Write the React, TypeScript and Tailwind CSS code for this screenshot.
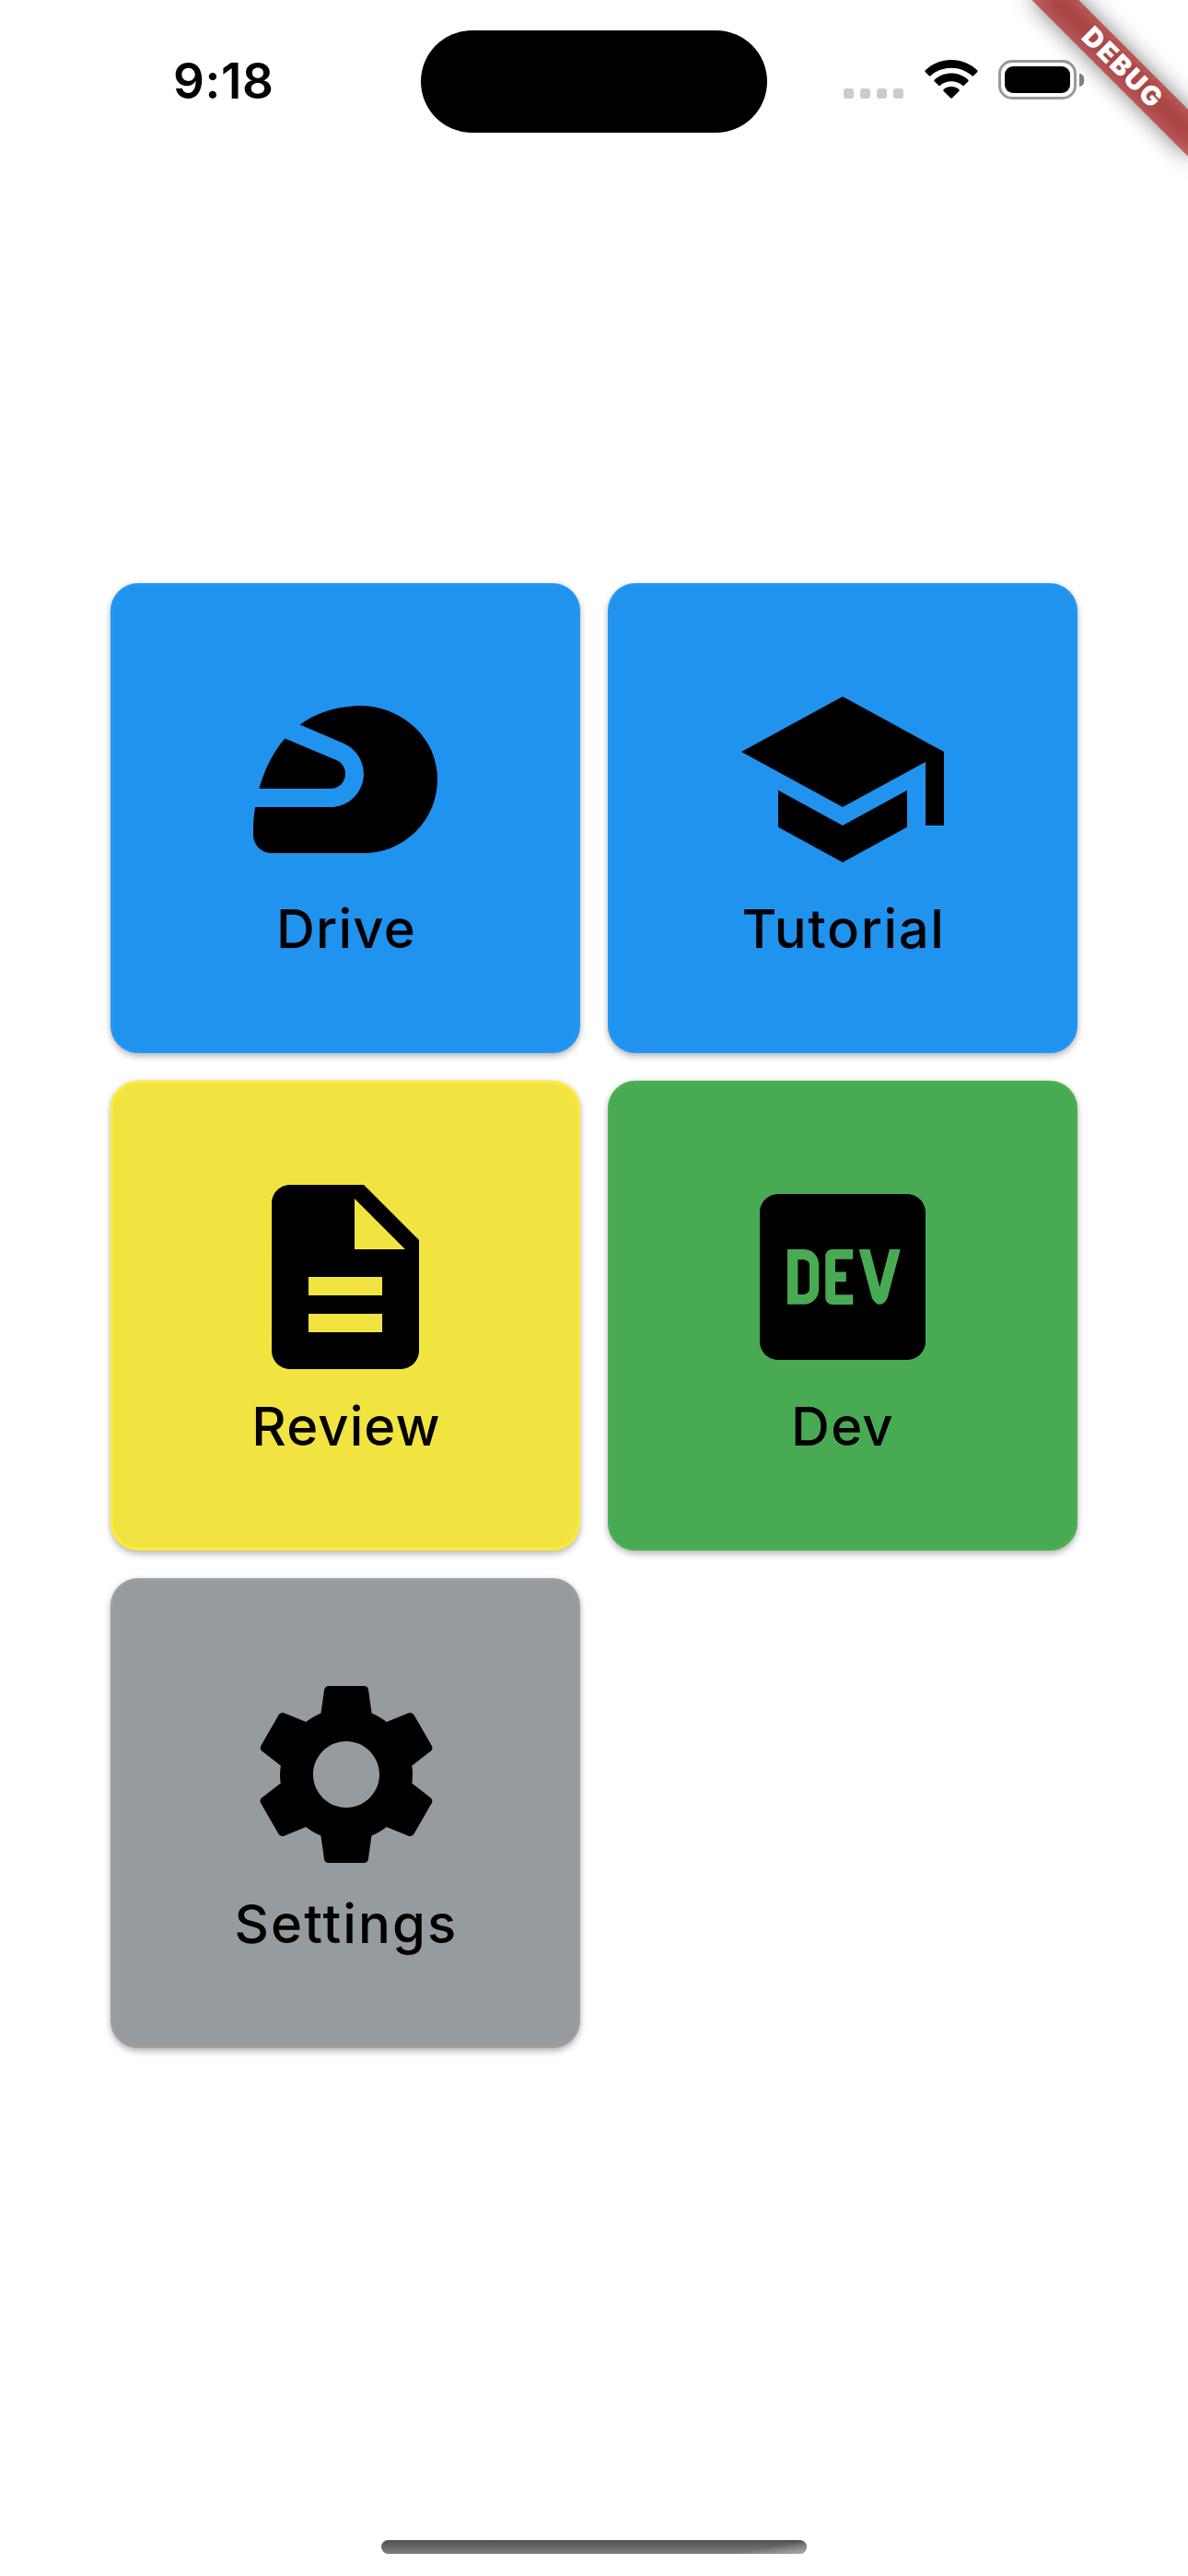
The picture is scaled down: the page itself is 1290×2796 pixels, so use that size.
import type { IconType } from "react-icons";
import {
  MdDescription,
  MdLogoDev,
  MdSchool,
  MdSettings,
  MdSportsMotorsports,
} from "react-icons/md";

type Tile = { label: string; icon: IconType; color: string; text: string; nudge?: string };

const tiles: Tile[] = [
  { label: "Drive", icon: MdSportsMotorsports, color: "border-[#2196f3] bg-[#2093ef]", text: "ml-[2px] tracking-[1.2px]" },
  { label: "Tutorial", icon: MdSchool, color: "border-[#2196f3] bg-[#2093ef]", text: "ml-[2px] tracking-[1.6px]" },
  { label: "Review", icon: MdDescription, color: "border-[#ffeb3b] bg-[#f2e440]", text: "ml-[2px] tracking-[1.1px]" },
  { label: "Dev", icon: MdLogoDev, color: "border-[#4caf50] bg-[#48ab54]", text: "tracking-[1.2px]" },
  { label: "Settings", icon: MdSettings, color: "border-[#9e9e9e] bg-[#959b9f]", text: "ml-[2px] tracking-[2.1px]", nudge: "ml-0.5" },
];

function TileCard({ label, icon: Icon, color, text, nudge = "" }: Tile) {
  return (
    <button
      className={`flex h-[510px] w-[510px] flex-col items-center justify-center rounded-[30px] border-[3px] shadow-[0_4px_7px_rgba(0,0,0,0.24),0_0_6px_rgba(0,0,0,0.1)] ${color}`}
    >
      <Icon className={`h-60 w-60 text-black ${nudge}`} />
      <span className={`text-[58px] leading-[84px] font-[460] text-black ${text}`}>{label}</span>
    </button>
  );
}

function Wifi() {
  return (
    <svg width="58" height="42" viewBox="0 0 58 42" className="ml-[23px]">
      <path d="M29 0C40 0 50 4.300 57.200 11.300Q58.100 12.200 57.200 13.200L53.100 17.300Q52.300 18.100 51.400 17.300C45.500 11.700 37.600 8.700 29 8.700S12.500 11.700 6.600 17.300Q5.700 18.100 4.900 17.300L.8 13.200Q-.1 12.200.8 11.300C8 4.300 18 0 29 0Z" />
      <path d="M29 14.600C36.100 14.600 42.500 17.300 47.200 21.600Q48.100 22.500 47.200 23.400L42.900 27.700Q42 28.500 41.100 27.700C37.900 24.900 33.700 23.200 29 23.200S20.100 24.900 16.900 27.700Q16 28.500 15.100 27.700L10.800 23.400Q9.900 22.500 10.800 21.600C15.500 17.300 21.900 14.600 29 14.600Z" />
      <path d="M29 29C32.300 29 35.200 30.200 37.300 32.100Q38.100 33 37.300 33.900L30 41.300Q29 42.200 28 41.300L20.700 33.900Q19.900 33 20.700 32.100C22.800 30.200 25.700 29 29 29Z" />
    </svg>
  );
}

function StatusBar() {
  return (
    <header className="flex h-[177px] items-start">
      <time className="mt-[57px] ml-[188px] w-[269px] text-[53px] leading-[62px] font-semibold tracking-[0.6px] whitespace-nowrap">
        9:18
      </time>
      <div className="mt-[33px] h-[111px] w-[376px] rounded-full bg-black" />
      <div className="mt-[65px] ml-[83px] flex items-end">
        <div className="flex gap-[7px] pb-px">
          {[0, 1, 2, 3].map((dot) => (
            <div key={dot} className="h-[11px] w-[11px] rounded-[3px] bg-[#cccccc]" />
          ))}
        </div>
        <div className="self-start">
          <Wifi />
        </div>
        <div className="ml-[22px] h-[43px] w-[85px] rounded-[15px] border-[3px] border-[#999999] p-1">
          <div className="h-[29px] w-[71px] rounded-[9px] bg-black" />
        </div>
        <div className="mb-[14px] ml-[3px] h-[14px] w-[5px] rounded-r-full bg-[#808080]" />
      </div>
    </header>
  );
}

/** Diagonal ribbon over the top right corner. */
function DebugBanner() {
  return (
    <div className="absolute top-0 right-0 h-0 w-0 rotate-45">
      <div className="absolute top-[84px] -left-[120px] h-9 w-60 bg-black/50 blur-[12px]" />
      <div className="absolute top-[84px] -left-[120px] flex h-9 w-60 items-center justify-center bg-[#b71c1c]/63 pl-1 text-[29px] leading-9 font-black tracking-[2px] text-white">
        DEBUG
      </div>
    </div>
  );
}

export default function App() {
  return (
    <div className="relative flex h-[2796px] w-[1290px] flex-col overflow-hidden bg-white font-['Inter',sans-serif] text-black">
      <StatusBar />
      <main className="mx-[120px] mt-[456px] grid grid-cols-[510px_510px] gap-[30px]">
        {tiles.map((tile) => (
          <TileCard key={tile.label} {...tile} />
        ))}
      </main>
      <div className="mx-auto mt-auto mb-6 h-[15px] w-[462px] overflow-hidden rounded-full bg-linear-to-b from-[#505050] to-[#808080]">
        <div className="ml-auto h-full w-20 bg-linear-to-br from-transparent from-50% to-[#aaaaaa]" />
      </div>
      <DebugBanner />
    </div>
  );
}
